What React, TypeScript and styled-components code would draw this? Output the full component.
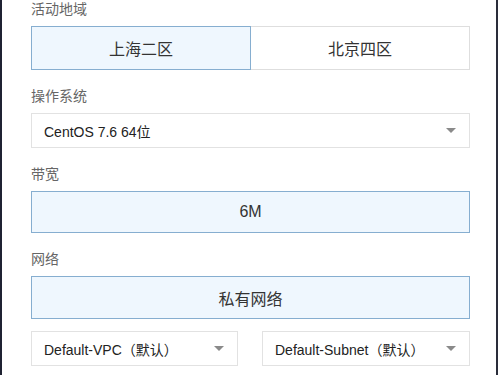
import React, {useState} from 'react';
import styled, {createGlobalStyle} from 'styled-components';

const GlobalStyle = createGlobalStyle`
    html, body {
        margin: 0;
        padding: 0;
        background: #fff;
    }
    body {
        font-family: "Liberation Sans", "Noto Sans CJK SC", Arial, sans-serif;
        color: #333;
    }
`;

const Frame = styled.div`
    box-sizing: border-box;
    width: 498px;
    height: 375px;
    overflow: hidden;
    border-left: 2px solid #1f2232;
    border-right: 2px solid #2a2d3a;
`;

const Form = styled.div`
    width: 439px;
    margin: -1px 0 0 29px;
    display: flex;
    flex-direction: column;
    gap: 16px;
`;

const Section = styled.div`
    display: flex;
    flex-direction: column;
    gap: 7px;
`;

const Label = styled.div`
    font-size: 14px;
    line-height: 20px;
    color: #666;
`;

const Segmented = styled.div`
    display: flex;
`;

const Option = styled.button<{$active?: boolean; $height?: number}>`
    flex: 1;
    box-sizing: border-box;
    height: ${(p) => p.$height ?? 44}px;
    margin: 0;
    padding: 0;
    font-family: inherit;
    font-size: 16px;
    color: #333;
    cursor: pointer;
    background: ${(p) => (p.$active ? '#eff7fe' : '#fff')};
    border: 1px solid ${(p) => (p.$active ? '#86aed0' : '#dedede')};
    position: relative;
    z-index: ${(p) => (p.$active ? 1 : 0)};
    & + & {
        margin-left: -1px;
    }
`;

const SelectBox = styled.div`
    box-sizing: border-box;
    height: 35px;
    display: flex;
    align-items: center;
    justify-content: space-between;
    padding: 0 13px 0 12px;
    border: 1px solid #e2e2e2;
    background: #fff;
    font-size: 14px;
    color: #222;
`;

const Caret = styled.span`
    width: 0;
    height: 0;
    border-left: 5px solid transparent;
    border-right: 5px solid transparent;
    border-top: 5px solid #8a8a8a;
`;

const SelectRow = styled.div`
    display: grid;
    grid-template-columns: 207px 208px;
    gap: 24px;
    margin-top: -4px;
`;

const Select = ({value}: {value: string}) => (
    <SelectBox>
        <span>{value}</span>
        <Caret />
    </SelectBox>
);

export default function App() {
    const [region, setRegion] = useState('上海二区');
    const regions = ['上海二区', '北京四区'];

    return (
        <Frame>
            <GlobalStyle />
            <Form>
                <Section>
                    <Label>活动地域</Label>
                    <Segmented>
                        {regions.map((r) => (
                            <Option key={r} $active={r === region} onClick={() => setRegion(r)}>
                                {r}
                            </Option>
                        ))}
                    </Segmented>
                </Section>
                <Section>
                    <Label>操作系统</Label>
                    <Select value="CentOS 7.6 64位" />
                </Section>
                <Section>
                    <Label>带宽</Label>
                    <Segmented>
                        <Option $active $height={42}>
                            6M
                        </Option>
                    </Segmented>
                </Section>
                <Section>
                    <Label>网络</Label>
                    <Segmented>
                        <Option $active $height={43}>
                            私有网络
                        </Option>
                    </Segmented>
                </Section>
                <SelectRow>
                    <Select value="Default-VPC（默认）" />
                    <Select value="Default-Subnet（默认）" />
                </SelectRow>
            </Form>
        </Frame>
    );
}
